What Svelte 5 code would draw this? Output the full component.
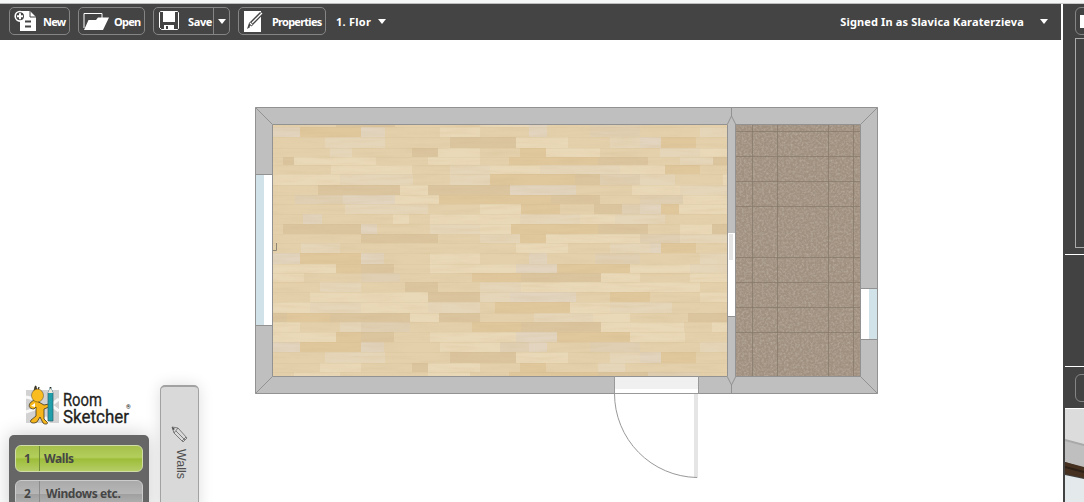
<script>
  const rows = [124, 127, 137, 148, 157, 165, 174, 185, 195, 204, 214, 224, 234, 243, 253, 264, 273, 282, 292, 302, 313, 322, 332, 342, 352, 363, 372, 377];
  const tones = { b: '#e4d1ac', l: '#ead9b8', d: '#dbc59f', t: '#e0c79c', g: '#e0cfb2', p: '#e6d6b9', w: '#e2d4be' };
  // Each row lists the tone of a plank and the x where it starts.
  const planks = [
    'b272 d336 b395 l480 w529 b547 g590 b640',
    'w272 t300 w361 b385 l440 b480 w529 b547 g590 b640 p700',
    'b272 p325 b385 d450 l516 b568 p610 w640 t661 b696',
    'b272 p330 b352 d412 l438 b480 t520 l546 b600 p660 l700',
    'b272 d283 l294 b376 l428 b480 t509 d598 b648 p680 d713',
    'b272 l331 b412 p450 l490 p540 l620 t665 b700',
    'l272 p340 b413 p450 t490 d575 g600 p640 b675 l723',
    'b272 d318 l400 d428 w510 b576 b600 l632 p680',
    'b272 g295 w343 l395 t439 d551 b600 g640 l683',
    'b272 b310 p345 b428 l480 t521 b560 d594 g622 w640 t661 l679',
    'b272 w303 b322 l393 b409 l430 p520 l580 p615 b665',
    'b272 d283 d320 w361 b377 p430 l480 t511 d598 b648 l680 d712',
    'b272 d361 b438 p480 t520 l546 l600 g640 p680',
    'b272 p301 b340 b450 l516 b568 p610 w650 t661 b696',
    'w272 t300 w361 b384 l430 b480 w529 b547 g595 b640 p700',
    'l272 t336 d361 b394 l430 w516 t557 l630 p690',
    'l272 b304 g361 b400 t472 d521 l601 b640 l690',
    'b272 p320 b361 d405 b438 p480 l521 l600 b700',
    'b272 l310 l361 d428 p480 w510 b576 t610 b650 l700',
    'l272 p310 l361 p428 b480 t495 l570 p610 b672',
    'd272 t287 d330 l410 d439 b480 p534 l593 b630 d688',
    'l272 b300 p340 g361 b410 t472 d521 l601 b684 l712',
    'l272 t336 d361 b394 l430 w516 t557 l630 b685',
    'w272 t300 w361 b384 l440 g500 w529 b547 g590 b640 p700',
    'b272 p325 b385 d450 l516 b568 p610 w640 t661 b696',
    'b272 l320 b361 d412 l428 b480 t520 b546 p598 b625 b690',
    'b272 l294 b340 l428 b470 t509 d598 g648 b700'
  ].map(r => r.split(' ').map(s => ({ tone: tones[s[0]], x: +s.slice(1) })));
  const grout = [752, 777, 828, 853];
  const groutRows = [131, 156, 181, 206, 257, 282, 307, 332];
</script>

<div class="app">
  <main>
    <header>
      <div class="cap"></div>
      <nav>
        <button class="new"><svg width="22" height="22" viewBox="0 0 22 22"><path fill="#fff" d="M6 1h10l6 6v14H6z"/><path d="M16 1v6h6" fill="none" stroke="#444"/><circle cx="6" cy="6.3" r="4.8" fill="#444" stroke="#fff" stroke-width="1.6"/><path d="M3 6.3h6M6 3.3v6" stroke="#fff" stroke-width="2"/><path d="M11 11.5h6M11 16.5h6" stroke="#444" stroke-width="2"/></svg><span>New</span></button>
        <button class="open"><svg width="26" height="20" viewBox="0 0 26 20"><path d="M1 17V2.5h18V7" fill="none" stroke="#fff"/><path d="M1 19 5.500 9H13l2-2.500h11L20 19z" fill="#fff"/></svg><span>Open</span></button>
        <button class="save"><svg width="20" height="20" viewBox="0 0 20 20"><path d="M1.500.5h17l1 1v16l-1 1h-16l-2-2v-15z" fill="none" stroke="#fff"/><path d="M4 1h12v10H4zM5 14h10v5H5z" fill="#fff"/><path d="M7 15h2v3H7z" fill="#444"/></svg><span>Save</span><i><b class="down"></b></i></button>
        <button class="props"><svg width="20" height="22" viewBox="0 0 20 22"><path d="M0 1h17v21H0z" fill="#fff"/><path d="m3 19 2-6L16 2l3 2.500L8 16z" fill="#444"/><path d="m6 13 2 2M8 13 18 3M6 16l1 1" stroke="#fff" stroke-width="1.300"/></svg><span>Properties</span></button>
        <div class="floor"><span>1. Flor</span><b class="down"></b></div>
        <div class="account"><span>Signed In as Slavica Karaterzieva</span><b class="down"></b></div>
      </nav>
    </header>
    <section>
      <svg class="plan" width="1061" height="462" viewBox="0 40 1061 462">
        <defs>
          <filter id="grain" x="0" y="0" width="100%" height="100%"><feTurbulence type="fractalNoise" baseFrequency=".025 .25" numOctaves="3" seed="4"/><feColorMatrix values="0 0 0 0 .62  0 0 0 0 .46  0 0 0 0 .25  1.1 0 0 0 -.42"/></filter>
          <filter id="stone" x="0" y="0" width="100%" height="100%"><feTurbulence type="fractalNoise" baseFrequency=".45" numOctaves="3" seed="8"/><feColorMatrix values="0 0 0 0 .76  0 0 0 0 .72  0 0 0 0 .64  1.6 0 0 0 -.6"/></filter>
        </defs>
        <path d="M255.500 107.500h622v286h-622z" fill="#bfbfbf" stroke="#929292"/>
        {#each planks as row, i}
          {#each row as p, j}
            <rect x={p.x} y={rows[i]} width={(row[j + 1]?.x ?? 728) - p.x} height={rows[i + 1] - rows[i]} fill={p.tone} />
          {/each}
          <path d="M272 {rows[i]}.500H728" stroke="#cfb88c" stroke-opacity=".18"/>
        {/each}
        <rect x="272" y="124" width="456" height="253" filter="url(#grain)" opacity=".4"/>
        <path d="M735 124h126v253H735z" fill="#a09080"/>
        <rect x="735" y="124" width="126" height="253" filter="url(#stone)" opacity=".4"/>
        <g stroke="#85786a" stroke-opacity=".7">
          {#each grout as x}<path d="M{x}.500 124v253"/>{/each}
          {#each groutRows as y}<path d="M735 {y}.500h126"/>{/each}
        </g>
        <path d="M728 124h7v252h-7z" fill="#bfbfbf"/>
        <g fill="none" stroke="#929292">
          <path d="M272.500 124.500h455v252h-455zM735.500 124.500h125v252h-125z"/>
          <path d="m255.500 107.500 17 17M255.500 393.500l17-17M877.500 107.500l-17 17M877.500 393.500l-17-17M731.500 107v9l-4 8M731.500 116l4 8M727.500 377l4 8 4-8M731.500 385v9"/>
        </g>
        <path d="M256 175h16v150h-16z" fill="#fff"/><path d="M256 175h8v150h-8z" fill="#d1e2e8"/>
        <path d="M255 174.500h17M255 325.500h17M255.500 174v152M272.500 174v152" stroke="#929292"/>
        <path d="M273 250.500h3.500V243" fill="none" stroke="#8f8776"/>
        <path d="M728 233h7v83h-7z" fill="#fff"/><path d="M729 234h4v26h-4z" fill="#e5e5e5"/>
        <path d="M727.500 316.500h8M727.500 233v84M735.500 233v84" stroke="#929292"/>
        <path d="M861 289h16v50h-16z" fill="#fff"/><path d="M869 289h8v50h-8z" fill="#d1e2e8"/>
        <path d="M861 288.500h17M861 339.500h17M860.500 288v52M877.500 288v52" stroke="#929292"/>
        <path d="M615 377h83v16h-83z" fill="#fff"/><path d="M615 377h83v12h-83z" fill="#f0f0f0"/>
        <path d="M694 394h4v84h-4z" fill="#e5e5e5"/>
        <path d="M614.500 376v18M698.500 376v18M614 393.500h84M614.500 393.500A84 84 0 0 0 697 477.500" fill="none" stroke="#999"/>
      </svg>

      <div class="steps">
        <div class="logo">
          <svg width="120" height="48" viewBox="20 382 120 48">
            <path d="M26 390h33v33H26z" fill="#d2d2d2"/><path d="m26 397 9 2v10l-9 3M59 399l-8 6 8 6M45 417l4 6" stroke="#f8f8f8" stroke-width="3" fill="none"/>
            <g stroke="#282316" stroke-width=".7"><path d="M34 391q1-6 2-5l1 5 2-4-1 6z" fill="#47442f"/><path d="M35 400c-7 2-8 9-1 9l2-2v9l-5 4c-2 3 3 4 6 2l3-5 3 6c2 2 6 1 4-1l-3-3v-10l5-2 3-4-3 1-5 1z" fill="#f5b51b"/><ellipse cx="37.500" cy="395.500" rx="6" ry="6.500" fill="#f9bc21" stroke-width=".4"/></g>
            <path d="M31 406l4-3v4l-4-1" fill="#fff"/><path d="m48 393 2.500-6 2.500 6v28h-5z" fill="#209fab" stroke="#28616b" stroke-width=".7"/><path d="m48 393 2.500-6 2.500 6z" fill="#eee8df"/><path d="m50 388 .5-1 .5 1z" fill="#222" stroke="#222"/>
            <g font-family="Roboto, sans-serif" font-size="17.500" fill="#231f20" stroke="#231f20" stroke-width=".3"><text x="63" y="406" textLength="39" lengthAdjust="spacingAndGlyphs">Room</text><text x="63" y="423" textLength="66" lengthAdjust="spacingAndGlyphs">Sketcher</text></g>
            <text x="126" y="409" font-size="6" font-family="Roboto, sans-serif">®</text>
          </svg>
        </div>
        <div class="menu">
          <div class="step active"><em>1</em><span>Walls</span></div>
          <div class="step"><em>2</em><span>Windows etc.</span></div>
        </div>
      </div>
      <div class="tab">
        <svg width="18" height="18" viewBox="0 0 18 18"><path d="m1 1 2 6 9 9 4-4L7 2zM3 7l4-5M5 5l9 9M11 15l4-4" fill="none" stroke="#666" stroke-width=".8"/><path d="m1 1 1 3 2-1z" fill="#444"/></svg>
        <span>Walls</span>
      </div>
    </section>
  </main>
  <aside>
    <div class="toprow"><div class="camera"></div></div>
    <div class="frame"></div>
    <div class="blank"></div>
    <div class="controls"><div></div></div>
    <svg class="view" width="19" height="93" viewBox="0 0 19 93"><path fill="#dddcdd" d="M0 0h19v37L0 31z"/><path fill="#bfbfbf" d="m0 31 19 5v23L0 53z"/><path d="m0 31 19 5" stroke="#a9a9a9" stroke-width="2"/><path fill="#463121" d="m0 53 19 5v11L0 65z"/><path d="m0 58 19 5" stroke="#2e2118" stroke-width="2"/><path fill="#e4eaec" d="m0 66 19 4v23H0z"/></svg>
  </aside>
</div>

<style>
  :global(body) { margin: 0; background: #fff; }
  .app { display: grid; grid-template-columns: 1061px 21px; column-gap: 2px; width: 1084px; height: 502px; overflow: hidden; font-family: "Noto Sans", sans-serif; background: linear-gradient(#f4f5f4 3px, #c9c9c9 3px 4px, #fff 4px); }
  main { display: flex; flex-direction: column; }
  .cap { height: 4px; box-sizing: border-box; border-bottom: 1px solid #bdbdbd; background: #f4f7f5; }
  nav { height: 36px; background: #444; display: flex; padding: 3px 0 5px 9px; box-sizing: border-box; color: #fff; font-size: 11px; font-weight: 700; }
  button { height: 28px; box-sizing: border-box; border: 1px solid #858585; border-radius: 5px; background: transparent; color: #fff; font: inherit; padding: 0; display: flex; align-items: center; flex: none; white-space: nowrap; }
  .new { width: 61px; padding-left: 4px; gap: 7px; }
  .new span { letter-spacing: -.8px; }
  .open { width: 67px; padding-left: 4px; gap: 5px; margin-left: 8px; }
  .open span { letter-spacing: -.7px; }
  .save { width: 77px; padding-left: 5px; margin-left: 8px; }
  .save span { margin-left: 8px; width: 26px; letter-spacing: -.4px; }
  .save i { border-left: 1px solid #858585; height: 26px; width: 15px; display: flex; align-items: center; justify-content: center; }
  .props { width: 88px; padding-left: 5px; gap: 8px; margin-left: 8px; }
  .props span { letter-spacing: -.75px; }
  .down { border: 4px solid transparent; border-top: 5px solid #fff; border-bottom: 0; display: block; }
  .floor, .account { display: flex; align-items: center; white-space: nowrap; }
  .floor { margin-left: 10px; gap: 7px; letter-spacing: .25px; }
  .account { margin-left: auto; padding-right: 13px; gap: 16px; }
  .account span { letter-spacing: .14px; }
  section { height: 462px; position: relative; overflow: hidden; }
  .plan { display: block; }
  .steps { position: absolute; left: 9px; top: 342px; width: 140px; }
  .logo { height: 53px; padding-left: 11px; }
  .logo svg { display: block; }
  .menu { height: 80px; padding: 10px 6px; box-sizing: border-box; border-radius: 5px; background: #666; box-shadow: 0 0 20px #0003; display: flex; flex-direction: column; gap: 8px; }
  .step { height: 27px; flex: none; box-sizing: border-box; border: 1px solid #ccc; border-radius: 6px; background: linear-gradient(#aaa, #b6b6b6 50%, #9f9f9f 51%, #b4b4b4); display: flex; align-items: center; color: #464646; font-size: 12px; font-weight: 700; }
  .step em { font-style: normal; width: 24px; height: 25px; box-sizing: border-box; line-height: 25px; border-right: 1px solid #8b8b8b; text-align: center; }
  .step span { padding-left: 6px; white-space: nowrap; letter-spacing: -.4px; }
  .active { background: linear-gradient(#a5c14b, #b3ce5b 45%, #9dbd39 52%, #b5cd66); border-color: #d1dda8; }
  .active em { border-color: #728d38; }
  .active span { padding-left: 4px; }
  .tab { position: absolute; left: 160px; top: 345px; width: 39px; height: 130px; box-sizing: border-box; border: 1px solid #a2a2a2; border-top-width: 2px; border-radius: 5px; background: #d9d9d9; box-shadow: 0 0 15px #0002; display: flex; flex-direction: column; align-items: center; padding-top: 39px; gap: 5px; }
  .tab span { writing-mode: vertical-rl; color: #505050; font: 12.5px "Liberation Sans", sans-serif; padding-left: 3px; }
  aside { margin-top: 4px; height: 498px; background: #424242; overflow: hidden; }
  .toprow { height: 34px; box-sizing: border-box; padding: 3px 0 0 12px; }
  .camera { width: 30px; height: 28px; box-sizing: border-box; border: 1px solid #858585; border-radius: 6px; background: linear-gradient(#fff, #fff) 4px 7px / 20px 13px no-repeat; }
  .frame { margin-left: 12px; width: 20px; height: 210px; box-sizing: border-box; border: 1px solid #aaa; }
  .blank { margin: 6px 0 0 2px; height: 111px; border: solid #fff; border-width: 1px 0; }
  .controls { padding: 7px 0 0 12px; height: 41px; box-sizing: border-box; }
  .controls div { width: 28px; height: 28px; box-sizing: border-box; border: 1px solid #858585; border-radius: 6px; }
  .view { margin-left: 2px; border-top: 1px solid white; display: block; }
</style>
